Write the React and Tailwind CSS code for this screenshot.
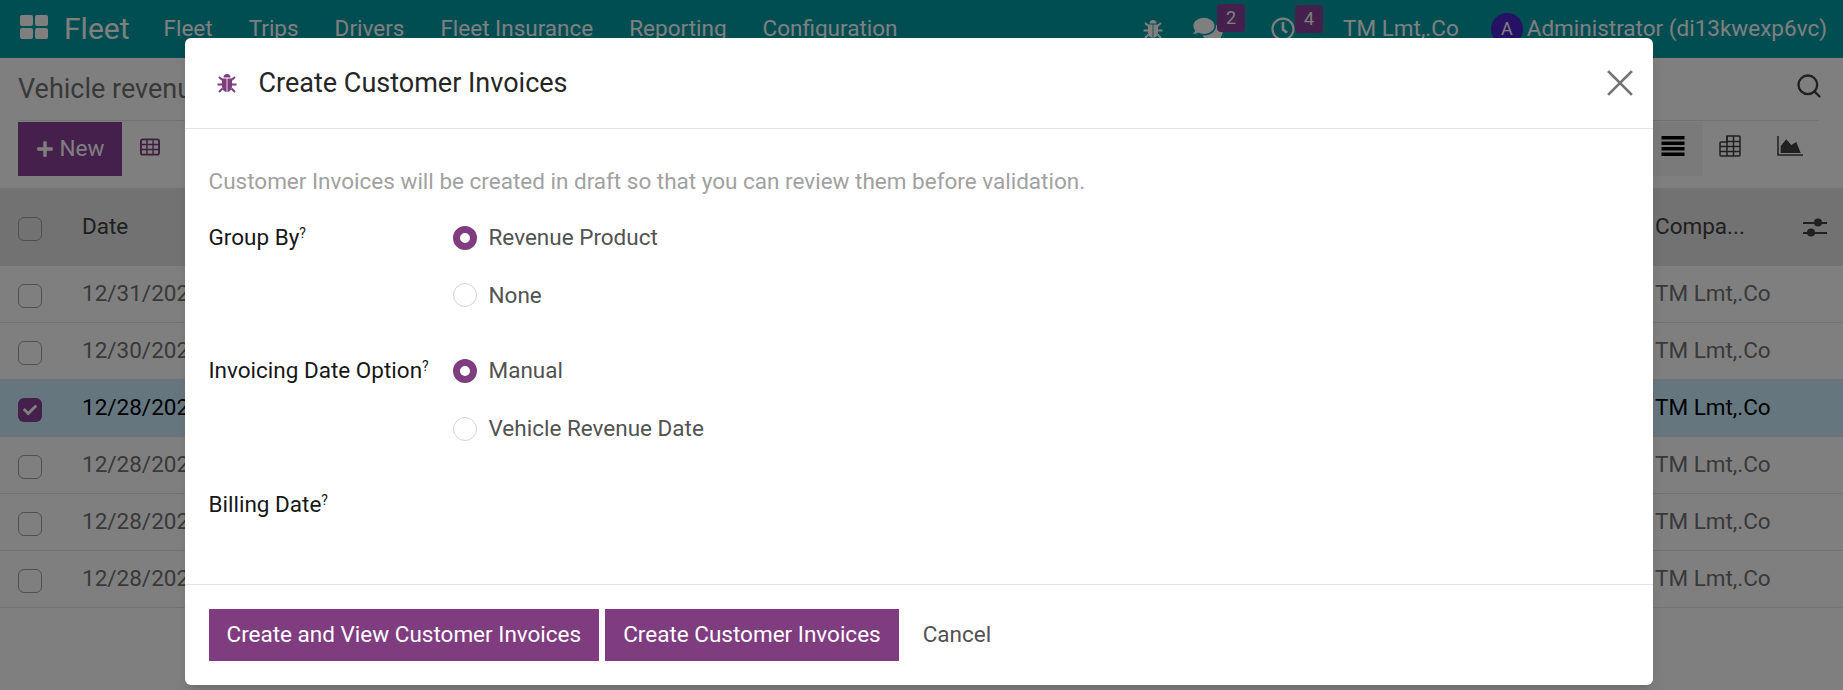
import React from 'react';
import { FaComments, FaRegClock, FaPlus, FaCheck } from 'react-icons/fa';
import { Search } from 'lucide-react';

const menus = ['Fleet', 'Trips', 'Drivers', 'Fleet Insurance', 'Reporting', 'Configuration'];

const rows = [
  { date: '12/31/2023' },
  { date: '12/30/2023' },
  { date: '12/28/2023', selected: true },
  { date: '12/28/2023' },
  { date: '12/28/2023' },
  { date: '12/28/2023' },
];

const Bug = ({ className }) => (
  <svg viewBox="0 0 20 20" className={className} fill="currentColor">
    <path d="M6.500 4.500a3.500 3.500 0 0 1 7 0Z" />
    <path d="M5 5.500h4.600v13.500c-3-.3-4.600-3-4.600-6Z" />
    <path d="M15 5.500h-4.600v13.500c3-.3 4.600-3 4.600-6Z" />
    <path
      d="M5.500 7L2 4M14.500 7L18 4M5 11.500H0.500M15 11.500H19.500M5.500 15.500L2 19M14.500 15.500L18 19"
      fill="none"
      stroke="currentColor"
      strokeWidth="2"
    />
  </svg>
);

const Badge = ({ children }) => (
  <span className="absolute -top-3 left-6 w-7 h-7 rounded-sm bg-[#8c4098] text-white text-lg flex items-center justify-center">
    {children}
  </span>
);

const Navbar = () => (
  <header className="h-14.5 bg-[#019aa5] text-white flex items-center pl-5 pr-4">
    <div className="grid grid-cols-2 gap-0.5 w-7 h-6 mb-1">
      <span className="rounded-xs bg-white" />
      <span className="rounded-xs bg-white" />
      <span className="rounded-xs bg-white" />
      <span className="rounded-xs bg-white" />
    </div>
    <span className="ml-4 text-3xl">Fleet</span>
    <nav className="ml-8.5 flex gap-9">
      {menus.map((m, i) => (
        <span key={i}>{m}</span>
      ))}
    </nav>
    <div className="ml-auto flex items-center">
      <Bug className="w-5 h-5" />
      <span className="relative ml-7.5">
        <FaComments className="w-7.5 h-6.5" />
        <Badge>2</Badge>
      </span>
      <span className="relative ml-12">
        <FaRegClock className="w-6 h-6" />
        <Badge>4</Badge>
      </span>
      <span className="ml-12">TM Lmt,.Co</span>
      <span className="ml-8 w-8 h-8 rounded-full bg-[#4a24c8] flex items-center justify-center text-lg">A</span>
      <span className="ml-1">Administrator (di13kwexp6vc)</span>
    </div>
  </header>
);

const ControlPanel = () => (
  <div className="pl-4.5 pr-6 h-32.5">
    <div className="h-15.75 flex items-center justify-between border-b border-neutral-200">
      <span className="text-[27px] text-neutral-500">Vehicle revenues</span>
      <Search className="w-7 h-7 mb-1.5 -mr-1 text-neutral-700" />
    </div>
    <div className="flex items-center justify-between h-14">
      <div className="flex items-center">
        <button className="h-13.5 w-26 bg-[#8c4098] text-white flex items-center justify-center gap-1.5">
          <FaPlus className="w-4.5 h-4.5" />
          New
        </button>
        <svg viewBox="0 0 21 18" className="ml-4.5 mb-1 w-5 h-4.5 text-[#7c3d80]" fill="none" stroke="currentColor" strokeWidth="2">
          <rect x="1" y="1" width="19" height="16" rx="2" />
          <path d="M1 6.300H20M1 11.600H20M7.300 1V17M13.700 1V17" strokeWidth="1.500" />
        </svg>
      </div>
      <div className="flex items-center pr-4 text-neutral-700">
        <div className="h-13.5 pl-2 pr-4.5 bg-neutral-100 flex items-center">
          <svg viewBox="0 0 23 20" className="w-6 h-5 mb-1.5 text-black" fill="currentColor">
            <rect x="0" y="0" width="23" height="3.500" />
            <rect x="0" y="5.500" width="23" height="3.500" />
            <rect x="0" y="11" width="23" height="3.500" />
            <rect x="0" y="16.500" width="23" height="3.500" />
          </svg>
        </div>
        <svg viewBox="0 0 22 22" className="ml-4 mb-1.5 w-5.5 h-5.5" fill="none" stroke="currentColor" strokeWidth="1.500">
          <path d="M8 1H20a1 1 0 0 1 1 1V20a1 1 0 0 1-1 1H2a1 1 0 0 1-1-1V8a1 1 0 0 1 1-1H8Z" />
          <path d="M8 1V21M14.500 1V21M1 11.500H21M1 16.500H21M8 6.500H21" />
        </svg>
        <svg viewBox="0 0 26 20" className="ml-9 mb-1.5 w-6.5 h-5" fill="currentColor">
          <path d="M1 0V19H26" fill="none" stroke="currentColor" strokeWidth="1.500" />
          <path d="M3.700 17V10L9.300 3.300L14.300 9L19.300 6L23.700 17Z" />
        </svg>
      </div>
    </div>
  </div>
);

const Check = ({ checked }) => (
  <span
    className={
      checked
        ? 'w-6 h-6 mt-1 rounded-md bg-[#8c4098] text-white flex items-center justify-center'
        : 'w-6 h-6 mt-1 rounded-md border border-neutral-400'
    }
  >
    {checked && <FaCheck className="w-3.5 h-3.5" />}
  </span>
);

const ListView = () => (
  <div>
    <div className="h-19.5 bg-neutral-200 flex items-center pl-4.5 text-neutral-700">
      <Check />
      <span className="ml-10 flex-1">Date</span>
      <span className="w-47 relative">
        Compa...
        <svg viewBox="0 0 24 20" className="absolute right-4 top-2 w-6 h-5" fill="currentColor">
          <rect x="0" y="4" width="24" height="2" />
          <rect x="0" y="14" width="24" height="2" />
          <circle cx="15" cy="4.500" r="4" />
          <circle cx="8" cy="14.500" r="4" />
        </svg>
      </span>
    </div>
    {rows.map((r, i) => (
      <div
        key={i}
        className={
          r.selected
            ? 'h-14.25 flex items-center pl-4.5 border-b border-neutral-200 bg-[#ccedff] text-black'
            : 'h-14.25 flex items-center pl-4.5 border-b border-neutral-200 text-neutral-500'
        }
      >
        <Check checked={r.selected} />
        <span className="ml-10 flex-1">{r.date}</span>
        <span className="w-47">TM Lmt,.Co</span>
      </div>
    ))}
  </div>
);

const Radio = ({ checked, label }) => (
  <div className="flex items-center gap-3 text-neutral-600">
    {checked ? (
      <span className="w-6 h-6 rounded-full border-7 border-[#7f3d80] bg-white" />
    ) : (
      <span className="w-6 h-6 rounded-full border border-neutral-300 bg-white" />
    )}
    {label}
  </div>
);

const Label = ({ children }) => (
  <label className="w-61 text-neutral-900">
    {children}
    <sup className="text-sm">?</sup>
  </label>
);

const Modal = () => (
  <div className="w-[1468px] h-[647px] bg-white rounded-md shadow-lg flex flex-col">
    <div className="h-22.75 shrink-0 border-b border-neutral-200 pl-8 pr-5 flex items-center">
      <Bug className="w-5 h-5 text-[#7f3d80]" />
      <h2 className="ml-5.5 text-[27px] text-neutral-800">Create Customer Invoices</h2>
      <button className="ml-auto text-neutral-500">
        <svg viewBox="0 0 24 24" className="w-6.5 h-6.5" fill="none" stroke="currentColor" strokeWidth="2.500">
          <path d="M1 1 L23 23 M23 1 L1 23" />
        </svg>
      </button>
    </div>
    <div className="flex-1 px-6 pt-9">
      <p className="text-neutral-400 mb-5.5">
        Customer Invoices will be created in draft so that you can review them before validation.
      </p>
      <div className="flex flex-col gap-10.5">
        <div className="flex">
          <Label>Group By</Label>
          <div className="flex flex-col gap-6">
            <Radio checked label="Revenue Product" />
            <Radio label="None" />
          </div>
        </div>
        <div className="flex">
          <Label>Invoicing Date Option</Label>
          <div className="flex flex-col gap-6">
            <Radio checked label="Manual" />
            <Radio label="Vehicle Revenue Date" />
          </div>
        </div>
        <div className="flex">
          <Label>Billing Date</Label>
        </div>
      </div>
    </div>
    <div className="border-t border-neutral-200 p-6 flex items-center gap-1.5">
      <button className="h-13 px-4.5 bg-[#7f3d80] text-white">Create and View Customer Invoices</button>
      <button className="h-13 px-4.5 bg-[#7f3d80] text-white">Create Customer Invoices</button>
      <button className="h-13 px-4.5 text-neutral-600">Cancel</button>
    </div>
  </div>
);

const App = () => {
  return (
    <div className="relative h-screen overflow-hidden bg-white font-[Roboto,sans-serif] text-[22.5px]">
      <Navbar />
      <ControlPanel />
      <ListView />
      <div className="absolute inset-0 bg-black/50 flex justify-center pt-9.5 pr-1.5">
        <Modal />
      </div>
    </div>
  );
};

export default App;
